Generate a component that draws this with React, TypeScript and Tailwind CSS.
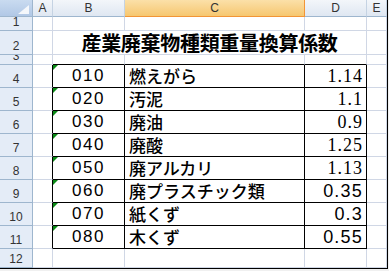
import React from "react";

const rows = [
  { code: "010", name: "燃えがら", val: "1.14", serif: true },
  { code: "020", name: "汚泥", val: "1.1", serif: true },
  { code: "030", name: "廃油", val: "0.9", serif: true },
  { code: "040", name: "廃酸", val: "1.25", serif: true },
  { code: "050", name: "廃アルカリ", val: "1.13", serif: true },
  { code: "060", name: "廃プラスチック類", val: "0.35", serif: false },
  { code: "070", name: "紙くず", val: "0.3", serif: false },
  { code: "080", name: "木くず", val: "0.55", serif: false },
];

const sans = { fontFamily: '"Liberation Sans", Arial, sans-serif' };

function RowHead({ n }: { n: number }) {
  return (
    <div
      className="flex items-end justify-center overflow-hidden border-r border-b border-[#9eb6ce] bg-[#e4ecf7] text-[12px] leading-[14px] text-[#333] font-['Liberation_Sans',Arial,sans-serif]"
    >
      <span className="pb-[1px]">{n}</span>
    </div>
  );
}

function ColHead({ l, active }: { l: string; active?: boolean }) {
  return active ? (
    <div className="flex items-center justify-center border-r border-b border-[#f29536] bg-gradient-to-b from-[#fbe0a8] to-[#f6c76f] text-[12px] text-[#333] font-['Liberation_Sans',Arial,sans-serif]">
      {l}
    </div>
  ) : (
    <div className="flex items-center justify-center border-r border-b border-r-[#c5d3e3] border-b-[#9eb6ce] bg-gradient-to-b from-[#f3f6fa] to-[#dfe7f2] text-[12px] text-[#333] font-['Liberation_Sans',Arial,sans-serif]">
      {l}
    </div>
  );
}

const g = "border-r border-b border-[#d0d7e5] bg-white";

export default function App() {
  return (
    <div className="w-[389px] h-[271px] overflow-hidden bg-[#f0f0f0]">
      <div className="w-[388px] h-[269px] border-r border-b border-black bg-white">
        <div className="grid grid-cols-[33px_20px_72px_180px_62px_20px] grid-rows-[17px_14px_24px_10px_repeat(8,23px)_19px]">
          {/* header */}
          <div className="relative border-r border-b border-[#9eb6ce] bg-gradient-to-b from-[#c9dbf0] to-[#b1c8e6]">
            <svg className="absolute right-[3px] bottom-[2px]" width="11" height="9" viewBox="0 0 11 9">
              <polygon points="11,0 11,9 0,9" fill="#f4f7fb" />
            </svg>
          </div>
          <ColHead l="A" />
          <ColHead l="B" />
          <ColHead l="C" active />
          <ColHead l="D" />
          <ColHead l="E" />

          {/* row 1 */}
          <RowHead n={1} />
          <div className={g} />
          <div className={g} />
          <div className={g} />
          <div className={g} />
          <div className={g} />

          {/* row 2 */}
          <RowHead n={2} />
          <div className={g} />
          <div className="col-span-3 flex items-end justify-center border-r border-b border-[#d0d7e5] bg-white">
            <span className="text-[20px] leading-[22px] font-bold text-black tracking-[-0.3px] font-['Noto_Sans_CJK_JP',sans-serif] pb-[0px]">
              産業廃棄物種類重量換算係数
            </span>
          </div>
          <div className={g} />

          {/* row 3 */}
          <RowHead n={3} />
          <div className={g} />
          <div className="border-r border-b border-r-[#d0d7e5] border-b-black bg-white" />
          <div className="border-r border-b border-r-[#d0d7e5] border-b-black bg-white" />
          <div className="border-r border-b border-r-[#d0d7e5] border-b-black bg-white" />
          <div className={g} />

          {rows.map((r, i) => (
            <React.Fragment key={r.code}>
              <RowHead n={i + 4} />
              <div className="border-r border-b border-r-black border-b-[#d0d7e5] bg-white" />
              <div className="relative flex items-end justify-center border-r border-b border-black bg-white pb-[2px]">
                <svg className="absolute left-0 top-0" width="5" height="5" viewBox="0 0 5 5">
                  <polygon points="0,0 5,0 0,5" fill="#0a8a16" />
                </svg>
                <span
                  className="text-[17px] leading-[18px] tracking-[1.5px] text-black"
                  style={sans}
                >
                  {r.code}
                </span>
              </div>
              <div className="flex items-end border-r border-b border-black bg-white pl-[4px] pb-[1px] overflow-hidden">
                <span className="text-[17px] leading-[20px] font-medium text-black whitespace-nowrap font-['Noto_Sans_CJK_JP',sans-serif]">
                  {r.name}
                </span>
              </div>
              <div className="flex items-end justify-end border-r border-b border-black bg-white pr-[3px] pb-[2px]">
                {r.serif ? (
                  <span className="text-[18px] leading-[18px] tracking-[1px] text-black font-['Liberation_Serif','Times_New_Roman',serif]">
                    {r.val}
                  </span>
                ) : (
                  <span className="text-[18px] leading-[18px] tracking-[1.2px] text-black font-['Liberation_Sans',Arial,sans-serif]">
                    {r.val}
                  </span>
                )}
              </div>
              <div className={g} />
            </React.Fragment>
          ))}

          {/* row 12 */}
          <RowHead n={12} />
          <div className={g} />
          <div className={g} />
          <div className={g} />
          <div className={g} />
          <div className={g} />
        </div>
      </div>
    </div>
  );
}
